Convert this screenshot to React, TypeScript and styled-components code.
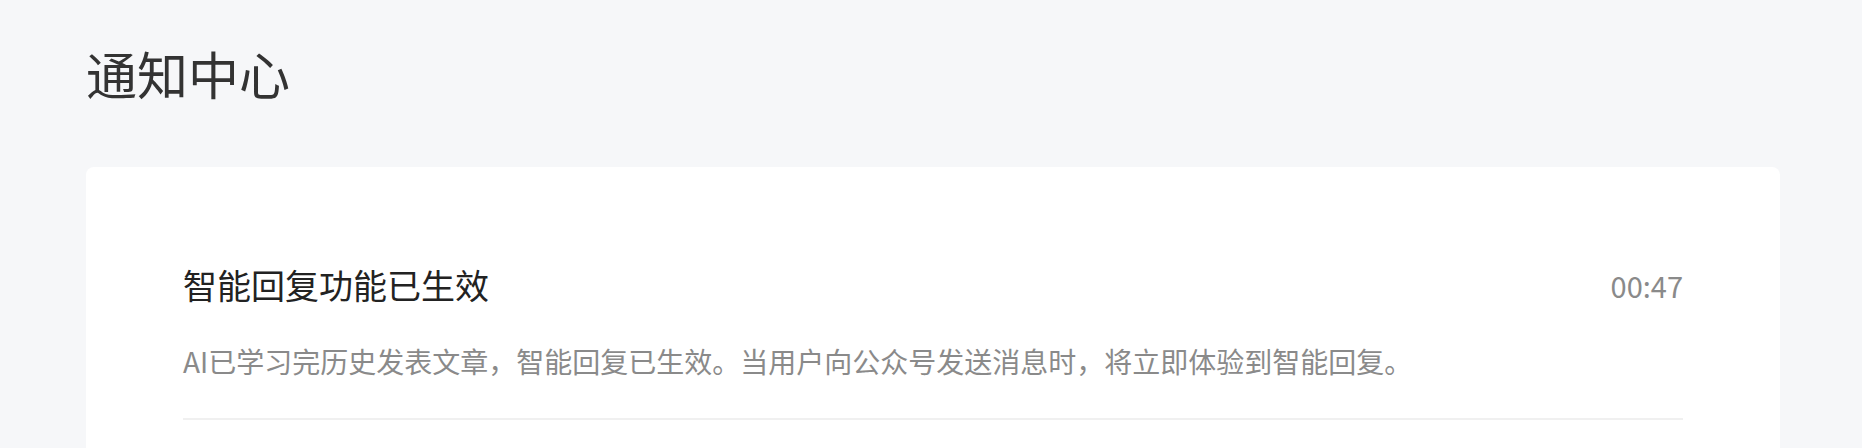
import styled, { createGlobalStyle } from "styled-components";

const GlobalStyle = createGlobalStyle`
  html, body {
    margin: 0;
    padding: 0;
    background: #f6f7f9;
    font-family: "Noto Sans CJK SC", "Noto Sans", sans-serif;
  }
`;

const notices = [
  {
    id: 1,
    title: "智能回复功能已生效",
    time: "00:47",
    content:
      "AI已学习完历史发表文章，智能回复已生效。当用户向公众号发送消息时，将立即体验到智能回复。",
  },
];

const App = () => {
  return (
    <>
      <GlobalStyle />
      <Page>
        <Heading>通知中心</Heading>
        <Card>
          {notices.map((n) => (
            <Notice key={n.id}>
              <NoticeHead>
                <NoticeTitle>{n.title}</NoticeTitle>
                <Time>{n.time}</Time>
              </NoticeHead>
              <NoticeText>{n.content}</NoticeText>
            </Notice>
          ))}
        </Card>
      </Page>
    </>
  );
};

export default App;

const Page = styled.div`
  height: 448px;
  overflow: hidden;
  box-sizing: border-box;
  padding: 40px 82px 0 86px;
  display: flex;
  flex-direction: column;
`;

const Heading = styled.h1`
  margin: 0;
  font-size: 51px;
  line-height: 67px;
  font-weight: 400;
  color: #333333;
`;

const Card = styled.div`
  margin-top: 60px;
  flex: 1;
  background: #ffffff;
  border-radius: 8px 8px 0 0;
  padding: 94px 97px 0 97px;
`;

const Notice = styled.div`
  padding-bottom: 34px;
  border-bottom: 2px solid #f0f0f0;
`;

const NoticeHead = styled.div`
  display: flex;
  justify-content: space-between;
  align-items: center;
`;

const NoticeTitle = styled.div`
  font-size: 34px;
  line-height: 48px;
  color: #222222;
`;

const Time = styled.div`
  font-size: 29px;
  line-height: 48px;
  color: #8a8a8a;
`;

const NoticeText = styled.div`
  margin-top: 30px;
  font-size: 28px;
  line-height: 45px;
  color: #8a8a8a;
`;
